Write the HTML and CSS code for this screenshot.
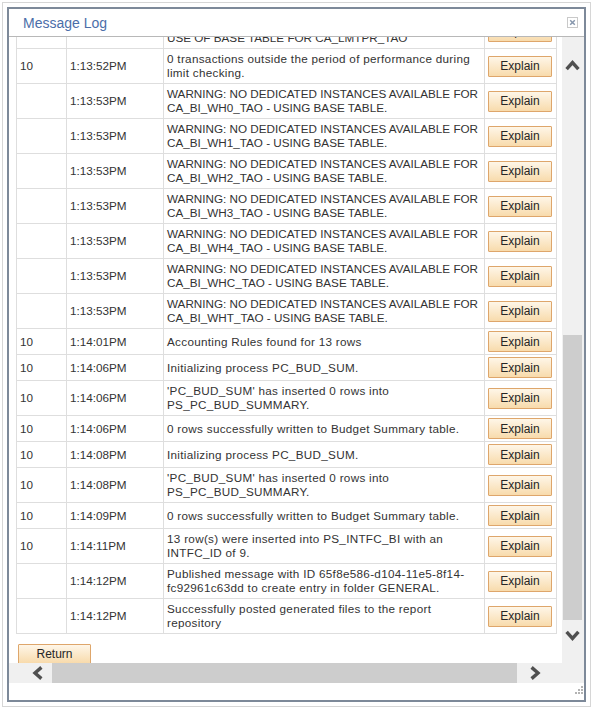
FILE: index.html
```html
<!DOCTYPE html>
<html lang="en">
<head>
<meta charset="utf-8">
<title>Message Log</title>
<link rel="stylesheet" href="styles.css">
</head>
<body>
<div class="frame">
  <div class="window">
    <div class="titlebar">
      <span class="title">Message Log</span>
      <button class="close" type="button" aria-label="Close">
        <svg width="11" height="11" viewBox="0 0 11 11"><rect x="0.5" y="0.5" width="10" height="10" fill="#fff" stroke="#c9c9c9"/><path d="M3.2 3.2L7.8 7.8M7.8 3.2L3.2 7.8" stroke="#8797ad" stroke-width="1.5" fill="none"/></svg>
      </button>
    </div>
    <div class="main">
      <div class="viewport">
        <table class="log">
          <colgroup><col class="c1"><col class="c2"><col class="c3"><col class="c4"></colgroup>
          <tbody>
            <tr><td></td><td></td><td class="msg caps">WARNING: NO DEDICATED INSTANCES AVAILABLE. MAKING<br>USE OF BASE TABLE FOR CA_LMTPR_TAO</td><td class="act"><button class="btn" type="button">Explain</button></td></tr>
            <tr><td>10</td><td>1:13:52PM</td><td class="msg">0 transactions outside the period of performance during<br>limit checking.</td><td class="act"><button class="btn" type="button">Explain</button></td></tr>
            <tr><td></td><td>1:13:53PM</td><td class="msg caps">WARNING: NO DEDICATED INSTANCES AVAILABLE FOR<br>CA_BI_WH0_TAO - USING BASE TABLE.</td><td class="act"><button class="btn" type="button">Explain</button></td></tr>
            <tr><td></td><td>1:13:53PM</td><td class="msg caps">WARNING: NO DEDICATED INSTANCES AVAILABLE FOR<br>CA_BI_WH1_TAO - USING BASE TABLE.</td><td class="act"><button class="btn" type="button">Explain</button></td></tr>
            <tr><td></td><td>1:13:53PM</td><td class="msg caps">WARNING: NO DEDICATED INSTANCES AVAILABLE FOR<br>CA_BI_WH2_TAO - USING BASE TABLE.</td><td class="act"><button class="btn" type="button">Explain</button></td></tr>
            <tr><td></td><td>1:13:53PM</td><td class="msg caps">WARNING: NO DEDICATED INSTANCES AVAILABLE FOR<br>CA_BI_WH3_TAO - USING BASE TABLE.</td><td class="act"><button class="btn" type="button">Explain</button></td></tr>
            <tr><td></td><td>1:13:53PM</td><td class="msg caps">WARNING: NO DEDICATED INSTANCES AVAILABLE FOR<br>CA_BI_WH4_TAO - USING BASE TABLE.</td><td class="act"><button class="btn" type="button">Explain</button></td></tr>
            <tr><td></td><td>1:13:53PM</td><td class="msg caps">WARNING: NO DEDICATED INSTANCES AVAILABLE FOR<br>CA_BI_WHC_TAO - USING BASE TABLE.</td><td class="act"><button class="btn" type="button">Explain</button></td></tr>
            <tr><td></td><td>1:13:53PM</td><td class="msg caps">WARNING: NO DEDICATED INSTANCES AVAILABLE FOR<br>CA_BI_WHT_TAO - USING BASE TABLE.</td><td class="act"><button class="btn" type="button">Explain</button></td></tr>
            <tr><td>10</td><td>1:14:01PM</td><td class="msg">Accounting Rules found for 13 rows</td><td class="act"><button class="btn" type="button">Explain</button></td></tr>
            <tr><td>10</td><td>1:14:06PM</td><td class="msg">Initializing process PC_BUD_SUM.</td><td class="act"><button class="btn" type="button">Explain</button></td></tr>
            <tr><td>10</td><td>1:14:06PM</td><td class="msg">'PC_BUD_SUM' has inserted 0 rows into<br>PS_PC_BUD_SUMMARY.</td><td class="act"><button class="btn" type="button">Explain</button></td></tr>
            <tr><td>10</td><td>1:14:06PM</td><td class="msg">0 rows successfully written to Budget Summary table.</td><td class="act"><button class="btn" type="button">Explain</button></td></tr>
            <tr><td>10</td><td>1:14:08PM</td><td class="msg">Initializing process PC_BUD_SUM.</td><td class="act"><button class="btn" type="button">Explain</button></td></tr>
            <tr><td>10</td><td>1:14:08PM</td><td class="msg">'PC_BUD_SUM' has inserted 0 rows into<br>PS_PC_BUD_SUMMARY.</td><td class="act"><button class="btn" type="button">Explain</button></td></tr>
            <tr><td>10</td><td>1:14:09PM</td><td class="msg">0 rows successfully written to Budget Summary table.</td><td class="act"><button class="btn" type="button">Explain</button></td></tr>
            <tr><td>10</td><td>1:14:11PM</td><td class="msg">13 row(s) were inserted into PS_INTFC_BI with an<br>INTFC_ID of 9.</td><td class="act"><button class="btn" type="button">Explain</button></td></tr>
            <tr><td></td><td>1:14:12PM</td><td class="msg">Published message with ID 65f8e586-d104-11e5-8f14-<br>fc92961c63dd to create entry in folder GENERAL.</td><td class="act"><button class="btn" type="button">Explain</button></td></tr>
            <tr><td></td><td>1:14:12PM</td><td class="msg">Successfully posted generated files to the report<br>repository</td><td class="act"><button class="btn" type="button">Explain</button></td></tr>
          </tbody>
        </table>
        <button class="btn return" type="button">Return</button>
      </div>
      <div class="vscroll">
        <svg class="vs-arrow vs-up" width="15" height="12" viewBox="0 0 15 12"><polyline points="1.6,10.2 7.5,3.6 13.4,10.2" fill="none" stroke="#505050" stroke-width="3.4"/></svg>
        <div class="vs-thumb"></div>
        <svg class="vs-arrow vs-down" width="15" height="12" viewBox="0 0 15 12"><polyline points="1.6,1.8 7.5,8.4 13.4,1.8" fill="none" stroke="#505050" stroke-width="3.4"/></svg>
      </div>
    </div>
    <div class="hrow">
      <div class="hscroll">
        <svg class="hs-left" width="11" height="14" viewBox="0 0 11 14"><polyline points="9.4,1.4 3,7 9.4,12.6" fill="none" stroke="#505050" stroke-width="3.4"/></svg>
        <div class="hs-thumb"></div>
        <svg class="hs-right" width="11" height="14" viewBox="0 0 11 14"><polyline points="1.6,1.4 8,7 1.6,12.6" fill="none" stroke="#505050" stroke-width="3.4"/></svg>
      </div>
      <div class="corner"></div>
    </div>
    <div class="status">
      <svg class="grip" width="9" height="9" viewBox="0 0 9 9"><g fill="#b3b3b3"><rect x="7" y="1" width="2" height="2"/><rect x="4" y="4" width="2" height="2"/><rect x="7" y="4" width="2" height="2"/><rect x="1" y="7" width="2" height="2"/><rect x="4" y="7" width="2" height="2"/><rect x="7" y="7" width="2" height="2"/></g></svg>
    </div>
  </div>
</div>
</body>
</html>
```

FILE: styles.css
```css
* { box-sizing: border-box; }

body {
  margin: 0;
  background: #fff;
  font-family: "Liberation Sans", Arial, sans-serif;
  color: #333;
}

.frame {
  margin: 2px;
  width: 589px;
  height: 705px;
  border: 1px solid #d6d6d6;
  padding: 4px;
}

.window {
  height: 100%;
  border: 2px solid #7d8999;
  background: #fff;
  display: flex;
  flex-direction: column;
}

.titlebar {
  height: 28px;
  flex: none;
  border-bottom: 1px solid #b8b8b8;
  display: flex;
  align-items: center;
  justify-content: space-between;
  padding: 0 6px 0 14px;
}

.title {
  font-size: 14px;
  color: #4b6ea9;
  margin-top: 1px;
}

.close {
  border: 0;
  padding: 0;
  background: none;
  width: 11px;
  height: 11px;
  display: block;
}
.close svg { display: block; }

.main {
  height: 626px;
  flex: none;
  display: flex;
}

.viewport {
  flex: 1;
  overflow: hidden;
  padding-left: 7px;
}

.log {
  border-collapse: collapse;
  table-layout: fixed;
  width: 540px;
  margin-top: -24px;
  font-size: 11.7px;
  color: #333;
}

.c1 { width: 50px; }
.c2 { width: 97px; }
.c3 { width: 321px; }
.c4 { width: 72px; }

.log td {
  border: 1px solid #dedede;
  padding: 3px 3px;
  line-height: 14px;
  vertical-align: middle;
  white-space: nowrap;
  overflow: hidden;
}

.log td.msg { letter-spacing: 0.3px; }
.log td.msg.caps { letter-spacing: 0; }

.log td.act {
  padding: 2px 3px;
}

.btn {
  display: block;
  width: 64px;
  height: 21px;
  padding: 0;
  border: 1px solid #dea66b;
  border-radius: 1px;
  background: linear-gradient(#fef6e8, #f8dbac);
  font-family: "Liberation Sans", Arial, sans-serif;
  font-size: 12px;
  color: #262626;
}

.return {
  width: 73px;
  height: 20px;
  margin: 10px 0 0 2px;
}

.vscroll {
  width: 22px;
  flex: none;
  background: #f0f0f0;
  display: flex;
  flex-direction: column;
}

.vs-arrow { display: block; margin-left: 3px; flex: none; }
.vs-up { margin-top: 22px; }
.vs-thumb {
  flex: none;
  margin: 264px 0 0 1px;
  width: 19px;
  height: 285px;
  background: #cdcdcd;
}
.vs-down { margin-top: 10px; }

.hrow {
  height: 20px;
  flex: none;
  display: flex;
}

.hscroll {
  flex: 1;
  background: #f0f0f0;
  display: flex;
  align-items: center;
}

.hs-left { display: block; margin-left: 23px; flex: none; }
.hs-thumb {
  flex: none;
  margin-left: 9px;
  width: 465px;
  height: 20px;
  background: #cdcdcd;
}
.hs-right { display: block; margin-left: 13px; flex: none; }

.corner {
  width: 22px;
  flex: none;
  background: #f0f0f0;
}

.status {
  flex: 1;
  display: flex;
  justify-content: flex-end;
  align-items: flex-end;
  padding: 0 1px 6px 0;
}
.grip { display: block; }
```
